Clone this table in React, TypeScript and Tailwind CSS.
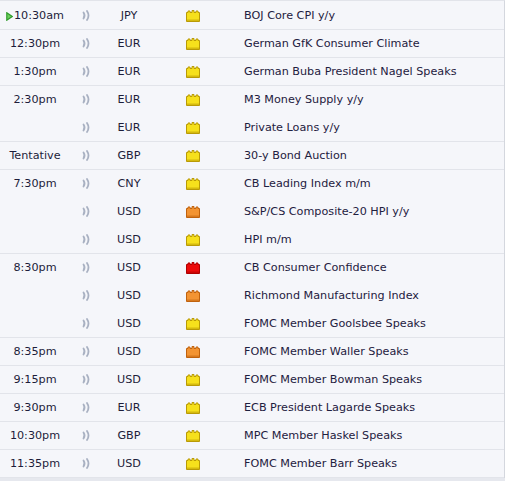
import React from "react";

type Impact = "low" | "mid" | "high";

type Row = {
  time?: string;
  cur: string;
  impact: Impact;
  event: string;
  live?: boolean;
};

// each inner array is one time group; the border sits under the group only
const groups: Row[][] = [
  [{ time: "10:30am", cur: "JPY", impact: "low", event: "BOJ Core CPI y/y", live: true }],
  [{ time: "12:30pm", cur: "EUR", impact: "low", event: "German GfK Consumer Climate" }],
  [{ time: "1:30pm", cur: "EUR", impact: "low", event: "German Buba President Nagel Speaks" }],
  [
    { time: "2:30pm", cur: "EUR", impact: "low", event: "M3 Money Supply y/y" },
    { cur: "EUR", impact: "low", event: "Private Loans y/y" },
  ],
  [{ time: "Tentative", cur: "GBP", impact: "low", event: "30-y Bond Auction" }],
  [
    { time: "7:30pm", cur: "CNY", impact: "low", event: "CB Leading Index m/m" },
    { cur: "USD", impact: "mid", event: "S&P/CS Composite-20 HPI y/y" },
    { cur: "USD", impact: "low", event: "HPI m/m" },
  ],
  [
    { time: "8:30pm", cur: "USD", impact: "high", event: "CB Consumer Confidence" },
    { cur: "USD", impact: "mid", event: "Richmond Manufacturing Index" },
    { cur: "USD", impact: "low", event: "FOMC Member Goolsbee Speaks" },
  ],
  [{ time: "8:35pm", cur: "USD", impact: "mid", event: "FOMC Member Waller Speaks" }],
  [{ time: "9:15pm", cur: "USD", impact: "low", event: "FOMC Member Bowman Speaks" }],
  [{ time: "9:30pm", cur: "EUR", impact: "low", event: "ECB President Lagarde Speaks" }],
  [{ time: "10:30pm", cur: "GBP", impact: "low", event: "MPC Member Haskel Speaks" }],
  [{ time: "11:35pm", cur: "USD", impact: "low", event: "FOMC Member Barr Speaks" }],
];

const impactColors: Record<Impact, { fill: string; edge: string }> = {
  low: { fill: "#f6e01c", edge: "#b99a06" },
  mid: { fill: "#f39433", edge: "#c0620e" },
  high: { fill: "#ec0a0a", edge: "#b00000" },
};

function ImpactIcon({ level }: { level: Impact }) {
  const c = impactColors[level];
  return (
    <svg width="14" height="12" viewBox="0 0 14 12">
      <path
        d="M0.5 11.5 V2.5 H2 V1 H4 V2.5 H6 V0.5 H8 V2.5 H10 V1 H12 V2.5 H13.5 V11.5 Z"
        fill={c.fill}
        stroke={c.edge}
        strokeWidth="1"
      />
      <rect x="1" y="9.5" width="12" height="1.5" fill={c.edge} opacity="0.55" />
    </svg>
  );
}

function SpeakerIcon() {
  return (
    <svg width="9" height="11" viewBox="0 0 9 11" fill="none">
      <path d="M1.5 2.5 Q3.6 5.5 1.5 8.5" stroke="#a9b1c2" strokeWidth="1.8" strokeLinecap="round" />
      <path d="M5 1 Q8 5.5 5 10" stroke="#a9b1c2" strokeWidth="1.8" strokeLinecap="round" />
    </svg>
  );
}

function LiveArrow() {
  return (
    <svg width="7" height="9" viewBox="0 0 7 9" className="mr-[1px]">
      <path d="M0.8 0.8 L6.2 4.5 L0.8 8.2 Z" fill="#6fcf5f" stroke="#2f9b2a" strokeWidth="1.2" />
    </svg>
  );
}

export default function App() {
  return (
    <div
      className="min-h-screen bg-[#e6e8ee] text-[11.2px] text-[#1d1d3a]"
      style={{ fontFamily: '"DejaVu Sans", Verdana, sans-serif' }}
    >
      <div className="bg-[#f5f6fa] border-t border-[#e2e4ea] border-r border-r-[#d4d7de] pt-[1px]">
        {groups.map((group, gi) => (
          <div key={gi}>
            {group.map((row, ri) => (
              <div
                key={ri}
                className={
                  ri === group.length - 1
                    ? "grid grid-cols-[70px_30px_58px_70px_1fr] items-center h-[28px] pt-[2px] border-b border-[#e2e4ea]"
                    : "grid grid-cols-[70px_30px_58px_70px_1fr] items-center h-[28px] pt-[2px] border-b border-transparent"
                }
              >
                <div className="flex items-center justify-center">
                  {row.live && <LiveArrow />}
                  {row.time}
                </div>
                <div className="flex items-center pl-[12px] -mt-[3px]">
                  <SpeakerIcon />
                </div>
                <div className="text-center">{row.cur}</div>
                <div className="flex justify-center -mt-[2px]">
                  <ImpactIcon level={row.impact} />
                </div>
                <div className="pl-4 text-[#1e2040] whitespace-nowrap">{row.event}</div>
              </div>
            ))}
          </div>
        ))}
      </div>
    </div>
  );
}
